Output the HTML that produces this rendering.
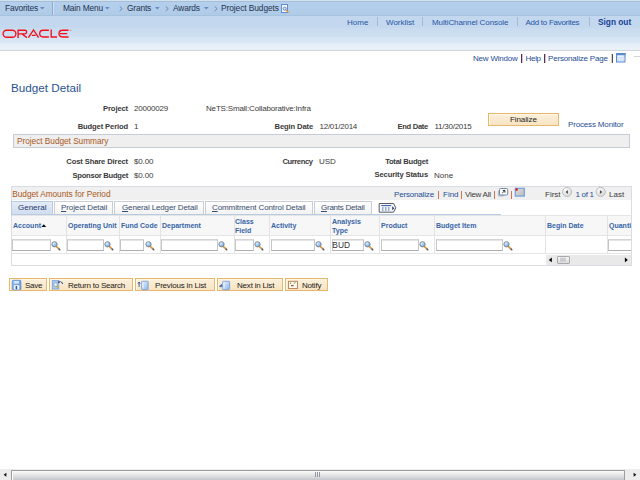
<!DOCTYPE html>
<html><head><meta charset="utf-8">
<style>
*{margin:0;padding:0;box-sizing:border-box}
html,body{width:640px;height:480px;overflow:hidden;background:#fff}
body{position:relative;font-family:"Liberation Sans",sans-serif;font-size:8px;line-height:10px;color:#333}
.a{position:absolute;white-space:nowrap}
#menubar{position:absolute;left:0;top:0;width:640px;height:16px;background:linear-gradient(#d0e1ef 0,#d0e1ef 1px,#aabfd6 1px,#aabfd6 2px,#b3cfeb 2px,#b1cde9 11px,#aecae5 15px,#a5c2df 15px)}
#hdr{position:absolute;left:0;top:16px;width:640px;height:35px;background:linear-gradient(#c3d7ee 0,#c3d7ee 11px,#c9dcef 13px,#cddff0 20px,#d7e5f4 22px,#d9e7f4 26px,#e5eef8 28px,#ebf1f9 34px);border-bottom:1px solid #d2d7dd}
.mt{color:#26334f;font-size:8.4px;letter-spacing:-0.17px}
.hl{color:#2656a4}
.sep{position:absolute;width:1px;background:#a8bcd6}
.lbl{font-weight:bold;color:#3a3a3a;font-size:7.6px;letter-spacing:-0.12px}
.val{color:#3b3b3b}
.lnk{color:#1f4d94}
.gbt{color:#aa5822}
.btn{position:absolute;height:13px;border:1px solid #e6b86e;background:linear-gradient(#fbf0dc,#f8e4c2);box-shadow:inset 1px 1px 0 #fff6e6}
.inp{position:absolute;height:12px;border:1px solid #c6c6c6;border-top-color:#d4d4d4;border-bottom-color:#aeaeae;box-shadow:inset 0 1px 0 #e6e6e6;background:#fff}
.ch{font-weight:bold;color:#3765a6;font-size:7px}
.cl{position:absolute;width:1px;background:#e3e3e3}
.tab{position:absolute;top:201px;height:14px;border:1px solid #c9ced6;border-bottom:none;background:linear-gradient(#ffffff,#f1f1f1);color:#3a4f70}
.tab u{text-decoration:underline;text-decoration-thickness:1px;text-underline-offset:1px}
</style></head><body>

<svg width="0" height="0" style="position:absolute"><defs>
<radialGradient id="mg" cx="0.35" cy="0.3" r="0.8"><stop offset="0" stop-color="#e6f3ff"/><stop offset="0.5" stop-color="#9cc8f4"/><stop offset="1" stop-color="#5b95d8"/></radialGradient>
<symbol id="mag" viewBox="0 0 11 11"><path d="M5.2 6.4L8.4 9.4" stroke="#e3993c" stroke-width="1.9" stroke-linecap="round"/><path d="M8.0 9.0L8.9 9.9" stroke="#3d5a8a" stroke-width="1.2" stroke-linecap="round"/><circle cx="3.5" cy="4.3" r="2.65" fill="url(#mg)" stroke="#808488" stroke-width="0.9"/></symbol>
</defs></svg>
<div id="menubar"></div>
<div class="sep" style="left:52px;top:2px;height:13px;background:#8fa9cc"></div>
<div class="sep" style="left:53px;top:2px;height:13px;background:#cfdff1"></div>
<div class="a mt" style="left:5px;top:3.3px">Favorites</div>
<svg class="a" style="left:40px;top:7px" width="5" height="3"><path d="M0 0H4.6L2.3 2.6z" fill="#6589c2"/></svg>
<div class="a mt" style="left:63px;top:3.3px">Main Menu</div>
<svg class="a" style="left:105px;top:7px" width="5" height="3"><path d="M0 0H4.6L2.3 2.6z" fill="#6589c2"/></svg>
<svg class="a" style="left:119px;top:6px" width="5" height="6"><path d="M0.6 0.3L3.2 2.7L0.6 5.1" fill="none" stroke="#6a86b0" stroke-width="0.95"/></svg>
<div class="a mt" style="left:127px;top:3.3px">Grants</div>
<svg class="a" style="left:155px;top:7px" width="5" height="3"><path d="M0 0H4.6L2.3 2.6z" fill="#6589c2"/></svg>
<svg class="a" style="left:165px;top:6px" width="5" height="6"><path d="M0.6 0.3L3.2 2.7L0.6 5.1" fill="none" stroke="#6a86b0" stroke-width="0.95"/></svg>
<div class="a mt" style="left:173px;top:3.3px">Awards</div>
<svg class="a" style="left:204px;top:7px" width="5" height="3"><path d="M0 0H4.6L2.3 2.6z" fill="#6589c2"/></svg>
<svg class="a" style="left:214px;top:6px" width="5" height="6"><path d="M0.6 0.3L3.2 2.7L0.6 5.1" fill="none" stroke="#6a86b0" stroke-width="0.95"/></svg>
<div class="a mt" style="left:221px;top:3.3px;letter-spacing:-0.08px">Project Budgets</div>
<svg class="a" style="left:280px;top:3px" width="10" height="11"><rect x="1.5" y="1.5" width="6" height="8" fill="#f4f8fd" stroke="#5f8bd8" stroke-width="1"/><circle cx="4.7" cy="5.7" r="1.5" fill="#dfe9f7" stroke="#5a78a8" stroke-width="0.9"/><path d="M5.9 7.0L8.6 9.5" stroke="#e39a34" stroke-width="1.4"/></svg>

<div id="hdr"></div>
<div class="a hl" style="left:347px;top:18px">Home</div>
<div class="sep" style="left:377px;top:17px;height:9px;background:#a7b8ce"></div>
<div class="a hl" style="left:386px;top:18px">Worklist</div>
<div class="sep" style="left:422px;top:17px;height:9px;background:#a7b8ce"></div>
<div class="a hl" style="left:432px;top:18px;letter-spacing:-0.1px">MultiChannel Console</div>
<div class="sep" style="left:517px;top:17px;height:9px;background:#a7b8ce"></div>
<div class="a hl" style="left:525.5px;top:18px;letter-spacing:-0.28px">Add to Favorites</div>
<div class="sep" style="left:589px;top:17px;height:9px;background:#a7b8ce"></div>
<div class="a hl" style="left:598px;top:17px;font-size:8.3px;font-weight:bold;color:#173f96">Sign out</div>

<svg class="a" style="left:0;top:0" width="80" height="45" viewBox="0 0 80 45">
<g fill="none" stroke="#f2101c" stroke-width="1.35">
<rect x="3.1" y="30.2" width="12.8" height="7.0" rx="3.5"/>
<path d="M18.1 37.9V30.2H24.9A1.8 1.8 0 0 1 24.9 33.8H18.1M21.8 33.8L26.9 37.6"/>
<path d="M28.4 37.7L33.5 30.0L38.6 37.7M31.8 35.4H35.6"/>
<path d="M48.9 30.2H43.1A3.4 3.4 0 0 0 43.1 37.0H48.9"/>
<path d="M51.2 29.6V37.0H57.1"/>
<path d="M68.5 30.2H62.4A3.4 3.4 0 0 0 62.4 37.0H68.5M60.0 33.6H67.2"/>
</g>
<circle cx="70.6" cy="30.2" r="0.8" fill="#f08080"/>
</svg>

<div class="a lnk" style="left:473px;top:54px;letter-spacing:-0.2px">New Window</div>
<div class="a lnk" style="left:525.5px;top:54px;letter-spacing:-0.3px">Help</div>
<div class="a lnk" style="left:548px;top:54px;letter-spacing:-0.18px">Personalize Page</div>
<div class="a" style="left:521px;top:54px;width:1px;height:9px;background:#5e2a4e;box-shadow:1px 0 0 rgba(110,80,150,0.35)"></div>
<div class="a" style="left:544px;top:54px;width:1px;height:9px;background:#5e2a4e;box-shadow:1px 0 0 rgba(110,80,150,0.35)"></div>
<div class="a" style="left:612px;top:54px;width:1px;height:9px;background:#3c4a86;box-shadow:-1px 0 0 rgba(230,170,90,0.6)"></div>
<svg class="a" style="left:615px;top:52px" width="12" height="11"><rect x="1.5" y="1.5" width="8.5" height="8.5" fill="#c9dbf2" stroke="#5b8ad2" stroke-width="1"/><rect x="1" y="1" width="9.5" height="2.2" fill="#5b8ad2"/><path d="M2.5 4.2H9" stroke="#fff" stroke-width="0.9"/><path d="M4.5 4.5V9.5M7 4.5V9.5M2 6.5H9.5M2 8.2H9.5" stroke="#eaf1fb" stroke-width="0.6"/></svg>
<div class="a" style="left:634px;top:56px;width:6px;height:1px;background:#d4d4d4"></div>

<div class="a" style="left:11px;top:81px;font-size:11.7px;line-height:14px;color:#2a5394">Budget Detail</div>

<div class="a lbl" style="right:512px;top:104px">Project</div>
<div class="a val" style="left:134px;top:104px;letter-spacing:-0.2px">20000029</div>
<div class="a val" style="left:206px;top:104px;letter-spacing:-0.17px">NeTS:Small:Collaborative:Infra</div>

<div class="a lbl" style="right:512px;top:122px">Budget Period</div>
<div class="a val" style="left:134px;top:122px">1</div>
<div class="a lbl" style="right:327px;top:122px">Begin Date</div>
<div class="a val" style="left:319.5px;top:122px;letter-spacing:-0.25px">12/01/2014</div>
<div class="a lbl" style="right:212px;top:122px;letter-spacing:-0.3px">End Date</div>
<div class="a val" style="left:434.5px;top:122px;letter-spacing:-0.25px">11/30/2015</div>

<div class="btn" style="left:488px;top:113px;width:71px"></div>
<div class="a" style="left:510px;top:115px;color:#1e1e1e;letter-spacing:-0.1px">Finalize</div>
<div class="a lnk" style="left:568px;top:119.5px;letter-spacing:-0.16px">Process Monitor</div>

<div class="a" style="left:13px;top:134px;width:617px;height:14px;border:1px solid #c6ccd6;background:#efefef"></div>
<div class="a gbt" style="left:17px;top:135.5px;font-size:8.3px;letter-spacing:-0.04px">Project Budget Summary</div>

<div class="a lbl" style="right:512px;top:157px">Cost Share Direct</div>
<div class="a val" style="left:134px;top:157px;letter-spacing:-0.15px">$0.00</div>
<div class="a lbl" style="right:327.5px;top:157px;letter-spacing:-0.42px">Currency</div>
<div class="a val" style="left:319px;top:157px">USD</div>
<div class="a lbl" style="right:212px;top:157px;letter-spacing:-0.25px">Total Budget</div>
<div class="a lbl" style="right:512px;top:171px;letter-spacing:-0.25px">Sponsor Budget</div>
<div class="a val" style="left:134px;top:171px;letter-spacing:-0.15px">$0.00</div>
<div class="a lbl" style="right:212px;top:169.5px">Security Status</div>
<div class="a val" style="left:434px;top:171px">None</div>

<!-- grid -->
<div class="a" style="left:11px;top:186px;width:621px;height:80px;border:1px solid #d9dde3;background:#fff"></div>
<div class="a" style="left:12px;top:187px;width:619px;height:13px;background:#f0f0f0"></div>
<div class="a gbt" style="left:12.3px;top:188.5px;font-size:8.3px;letter-spacing:-0.04px">Budget Amounts for Period</div>
<div class="a lnk" style="left:394px;top:190px;letter-spacing:-0.17px">Personalize</div>
<div class="a" style="left:394px;top:189px"></div>
<div class="a lnk" style="left:443px;top:190px">Find</div>
<div class="a val" style="left:465px;top:190px;letter-spacing:-0.28px">View All</div>
<div class="a" style="left:438px;top:191px;width:1px;height:8px;background:#cf7350"></div>
<div class="a" style="left:461px;top:191px;width:1px;height:8px;background:#cf7350"></div>
<div class="a" style="left:494px;top:191px;width:1px;height:8px;background:#cf7350"></div>
<div class="a" style="left:511px;top:191px;width:1px;height:8px;background:#cf7350"></div>
<svg class="a" style="left:497px;top:187px" width="12" height="11"><rect x="0.8" y="3.5" width="6" height="6" rx="1" fill="#b9bfc9"/><rect x="2.5" y="1.5" width="8.2" height="6.5" rx="1" fill="#fff" stroke="#6f86a6" stroke-width="1"/><path d="M5.2 6.2L7.8 3.6M5.8 3.5H7.9V5.6" fill="none" stroke="#222" stroke-width="0.9"/></svg>
<svg class="a" style="left:514px;top:187px" width="12" height="11"><defs><linearGradient id="ss" x1="0" y1="0" x2="1" y2="1"><stop offset="0" stop-color="#e0e0e0"/><stop offset="1" stop-color="#b8b8bc"/></linearGradient></defs><rect x="1.3" y="1.3" width="9" height="7.8" fill="url(#ss)" stroke="#6c9ce0" stroke-width="1.1"/><circle cx="2.6" cy="2.6" r="1.3" fill="#e02020"/></svg>
<div class="a val" style="left:545px;top:190px">First</div>
<svg class="a" style="left:561px;top:186px" width="13" height="12"><defs><radialGradient id="cg" cx="0.4" cy="0.35" r="0.75"><stop offset="0" stop-color="#ffffff"/><stop offset="1" stop-color="#cfcfcf"/></radialGradient></defs><circle cx="6.1" cy="5.9" r="4.6" fill="url(#cg)" stroke="#bbbbbb" stroke-width="0.9"/><path d="M4.5 5.9L6.9 3.9V7.9z" fill="#4c4c4c"/></svg>
<svg class="a" style="left:595px;top:186px" width="13" height="12"><circle cx="5.7" cy="5.9" r="4.6" fill="url(#cg)" stroke="#bbbbbb" stroke-width="0.9"/><path d="M7.3 5.9L4.9 3.9V7.9z" fill="#4c4c4c"/></svg>
<div class="a lnk" style="left:575.5px;top:190px;letter-spacing:-0.3px">1 of 1</div>
<div class="a val" style="left:609px;top:190px">Last</div>

<div class="tab" style="left:11px;width:42px;background:linear-gradient(#e3ebf6,#cfdcee);border-color:#b9c9df;color:#1f3a6c"><span class="a" style="left:6px;top:1px">General</span></div>
<div class="tab" style="left:54px;width:59px"><span class="a" style="left:6px;top:1px;letter-spacing:-0.1px"><u>P</u>roject Detail</span></div>
<div class="tab" style="left:114px;width:90px"><span class="a" style="left:7px;top:1px;letter-spacing:-0.13px"><u>G</u>eneral Ledger Detail</span></div>
<div class="tab" style="left:205px;width:108px"><span class="a" style="left:6px;top:1px;letter-spacing:-0.1px"><u>C</u>ommitment Control Detail</span></div>
<div class="tab" style="left:314px;width:58px"><span class="a" style="left:6px;top:1px;letter-spacing:-0.25px"><u>G</u>rants Detail</span></div>
<div class="a" style="left:11px;top:214px;width:490px;height:1px;background:#b7cbe3"></div>
<svg class="a" style="left:378px;top:202px" width="20" height="12"><path d="M1.2 1.5H15.6L17.8 5.8L15.6 10.2H1.2z" fill="#f4f7fc" stroke="#5b5b5b" stroke-width="1"/><path d="M3.3 3.6H13.2" stroke="#3f5fb0" stroke-width="1.1"/><g fill="#4f68a6"><circle cx="4.8" cy="5.9" r="0.75"/><circle cx="7.8" cy="5.9" r="0.75"/><circle cx="10.8" cy="5.9" r="0.75"/><circle cx="4.8" cy="8.1" r="0.75"/><circle cx="7.8" cy="8.1" r="0.75"/><circle cx="10.8" cy="8.1" r="0.75"/></g><path d="M14.2 4.2L16.4 6.2L14.2 8.2z" fill="#2a3f86"/></svg>

<div class="a" style="left:12px;top:215px;width:619px;height:21px;background:#f7f7f7;border-top:1px solid #e5e5e5;border-bottom:1px solid #e5e5e5"></div>
<div class="cl" style="left:66px;top:215px;height:38px"></div>
<div class="cl" style="left:119px;top:215px;height:38px"></div>
<div class="cl" style="left:160px;top:215px;height:38px"></div>
<div class="cl" style="left:234px;top:215px;height:38px"></div>
<div class="cl" style="left:269px;top:215px;height:38px"></div>
<div class="cl" style="left:330px;top:215px;height:38px"></div>
<div class="cl" style="left:379px;top:215px;height:38px"></div>
<div class="cl" style="left:434px;top:215px;height:38px"></div>
<div class="cl" style="left:545px;top:215px;height:38px"></div>
<div class="cl" style="left:607px;top:215px;height:38px"></div>
<div class="a" style="left:12px;top:253px;width:619px;height:1px;background:#e5e5e5"></div>

<div class="a ch" style="left:13px;top:221px">Account</div>
<div class="a ch" style="left:68px;top:221px">Operating Unit</div>
<div class="a ch" style="left:121px;top:221px">Fund Code</div>
<div class="a ch" style="left:162px;top:221px">Department</div>
<div class="a ch" style="left:235px;top:216.7px;line-height:9px">Class<br>Field</div>
<div class="a ch" style="left:271px;top:221px">Activity</div>
<div class="a ch" style="left:332px;top:216.7px;line-height:9px">Analysis<br>Type</div>
<div class="a ch" style="left:381px;top:221px">Product</div>
<div class="a ch" style="left:436px;top:221px">Budget Item</div>
<div class="a ch" style="left:547px;top:221px">Begin Date</div>
<div class="a ch" style="left:609px;top:221px;width:22px;overflow:hidden">Quantity</div>

<div class="inp" style="left:12px;top:239px;width:39px"></div>
<div class="inp" style="left:67px;top:239px;width:37px"></div>
<div class="inp" style="left:120px;top:239px;width:24px"></div>
<div class="inp" style="left:161px;top:239px;width:57px"></div>
<div class="inp" style="left:235px;top:239px;width:19px"></div>
<div class="inp" style="left:271px;top:239px;width:44px"></div>
<div class="inp" style="left:332px;top:239px;width:32px"><span class="a val" style="left:-0.7px;top:0px;font-size:8.4px;line-height:11px;color:#333">BUD</span></div>
<div class="inp" style="left:381px;top:239px;width:38px"></div>
<div class="inp" style="left:436px;top:239px;width:67px"></div>
<div class="a" style="left:608px;top:239px;width:23px;height:12px;overflow:hidden"><div class="inp" style="left:0;top:0;width:30px"></div></div>

<svg class="a" style="left:51.0px;top:239.5px" width="11" height="11"><use href="#mag"/></svg>
<svg class="a" style="left:104.1px;top:239.5px" width="11" height="11"><use href="#mag"/></svg>
<svg class="a" style="left:144.5px;top:239.5px" width="11" height="11"><use href="#mag"/></svg>
<svg class="a" style="left:218.2px;top:239.5px" width="11" height="11"><use href="#mag"/></svg>
<svg class="a" style="left:254.0px;top:239.5px" width="11" height="11"><use href="#mag"/></svg>
<svg class="a" style="left:315.1px;top:239.5px" width="11" height="11"><use href="#mag"/></svg>
<svg class="a" style="left:363.9px;top:239.5px" width="11" height="11"><use href="#mag"/></svg>
<svg class="a" style="left:418.9px;top:239.5px" width="11" height="11"><use href="#mag"/></svg>
<svg class="a" style="left:502.9px;top:239.5px" width="11" height="11"><use href="#mag"/></svg>
<svg class="a" style="left:40.5px;top:224px" width="6" height="3.5"><path d="M0.3 3.1L2.8 0.2L5.3 3.1z" fill="#111"/></svg>
<div class="a" style="left:546px;top:255px;width:85px;height:10px;background:#e9e9e9"></div>
<svg class="a" style="left:548px;top:257px" width="5" height="6"><path d="M0.8 2.9L3.8 0.6V5.2z" fill="#000"/></svg>
<svg class="a" style="left:624px;top:257px" width="5" height="6"><path d="M3.9 2.9L0.9 0.6V5.2z" fill="#000"/></svg>
<div class="a" style="left:557px;top:255.5px;width:13px;height:8.5px;border:1px solid #a9a9a9;border-radius:1px;background:linear-gradient(#f7f7f7,#d9d9d9)"></div>
<svg class="a" style="left:560px;top:257px" width="7" height="5"><path d="M1 0.5V4.5M3 0.5V4.5M5 0.5V4.5" stroke="#9aa0aa" stroke-width="0.8"/></svg>
<!-- buttons -->
<div class="btn" style="left:9px;top:278px;width:38px"></div>
<svg class="a" style="left:11px;top:279px" width="11" height="12"><defs><linearGradient id="fl" x1="0" y1="0" x2="1" y2="1"><stop offset="0" stop-color="#9cc2f2"/><stop offset="1" stop-color="#4d86d8"/></linearGradient></defs><rect x="1.3" y="1.3" width="8.6" height="9.4" rx="0.8" fill="url(#fl)" stroke="#5d8fd8" stroke-width="0.8"/><rect x="3" y="2" width="5" height="2.6" fill="#d6e6fa"/><rect x="2.8" y="6.2" width="5.6" height="4.4" fill="#f4f8fe"/><rect x="4.6" y="7" width="1.6" height="3.4" fill="#2f5fb0"/></svg>
<div class="a" style="left:25px;top:280.5px;color:#1a1a1a;letter-spacing:-0.25px">Save</div>
<div class="btn" style="left:49px;top:278px;width:84px"></div>
<svg class="a" style="left:51px;top:279px" width="14" height="12"><rect x="1.3" y="1.6" width="6.5" height="8.4" fill="#a8c8f0" stroke="#6c9ee0" stroke-width="0.7"/><circle cx="4.6" cy="5.6" r="1.9" fill="#e8f2fc" stroke="#8090a8" stroke-width="0.7"/><path d="M5.9 7.1L7.6 9.2" stroke="#c8b020" stroke-width="1.3"/><path d="M7.6 3.2Q9.6 1.6 11.2 3.8" fill="none" stroke="#34508a" stroke-width="0.9"/><circle cx="7.8" cy="3.2" r="0.9" fill="#2a4a8a"/><circle cx="11.4" cy="4.3" r="0.7" fill="#2a4a8a"/></svg>
<div class="a" style="left:68px;top:280.5px;color:#1a1a1a;letter-spacing:-0.22px">Return to Search</div>
<div class="btn" style="left:135px;top:278px;width:80px"></div>
<svg class="a" style="left:137px;top:279px" width="13" height="12"><defs><linearGradient id="pg" x1="0" y1="0" x2="1" y2="1"><stop offset="0" stop-color="#e8f1fc"/><stop offset="1" stop-color="#8fb6ea"/></linearGradient></defs><path d="M2.1 7.8V3.3M1 4.6L2.1 3L3.2 4.6" fill="none" stroke="#2450a0" stroke-width="0.9"/><rect x="4.6" y="2.3" width="6.6" height="8.3" rx="0.6" fill="url(#pg)" stroke="#6c9ae0" stroke-width="0.8"/><path d="M6 3.5V9.5" stroke="#ffffff" stroke-width="0.9" opacity="0.8"/></svg>
<div class="a" style="left:155px;top:280.5px;color:#1a1a1a;letter-spacing:-0.2px">Previous in List</div>
<div class="btn" style="left:217px;top:278px;width:66px"></div>
<svg class="a" style="left:219px;top:279px" width="13" height="12"><path d="M1 7.2H4.2M1.6 6.1L0.6 7.2L1.6 8.3M2.4 5.2V7.2" fill="none" stroke="#2450a0" stroke-width="0.9"/><rect x="3.6" y="2.3" width="7" height="8.3" rx="0.8" fill="url(#pg)" stroke="#6c9ae0" stroke-width="0.8"/><path d="M5 3.5V9.5" stroke="#ffffff" stroke-width="0.9" opacity="0.8"/></svg>
<div class="a" style="left:237px;top:280.5px;color:#1a1a1a;letter-spacing:-0.2px">Next in List</div>
<div class="btn" style="left:285px;top:278px;width:43px"></div>
<svg class="a" style="left:287px;top:279px" width="12" height="12"><rect x="1.6" y="2.3" width="8.8" height="7.3" fill="#fdfbf6" stroke="#b87a48" stroke-width="0.9"/><path d="M3 4.2H4.2M4 6.6H6.6" stroke="#9a5a2a" stroke-width="1.1"/><path d="M6.6 4.8L8.6 3.2" stroke="#3aa83a" stroke-width="0.9"/></svg>
<div class="a" style="left:302px;top:280.5px;color:#1a1a1a;letter-spacing:-0.2px">Notify</div>

<!-- bottom scrollbar -->
<div class="a" style="left:0;top:469px;width:640px;height:11px;background:#ececec"></div>
<svg class="a" style="left:0px;top:471px" width="8" height="7"><path d="M3.6 3.75L6.4 1.7V5.8z" fill="#111"/></svg>
<svg class="a" style="left:632px;top:471px" width="8" height="7"><path d="M4.4 3.75L1.6 1.7V5.8z" fill="#111"/></svg>
<div class="a" style="left:11px;top:470px;width:614px;height:10px;border:1px solid #9d9d9d;border-bottom:none;border-radius:1px 1px 0 0;background:linear-gradient(#fafafa,#e6e6e6 45%,#c6c7ce)"></div>
<div class="a" style="left:12px;top:471px;width:1px;height:9px;background:#fff"></div>
<svg class="a" style="left:314px;top:471px" width="8" height="7"><path d="M1.5 1V6M3.5 1V6M5.5 1V6" stroke="#8a909c" stroke-width="0.9"/></svg>
</body></html>
